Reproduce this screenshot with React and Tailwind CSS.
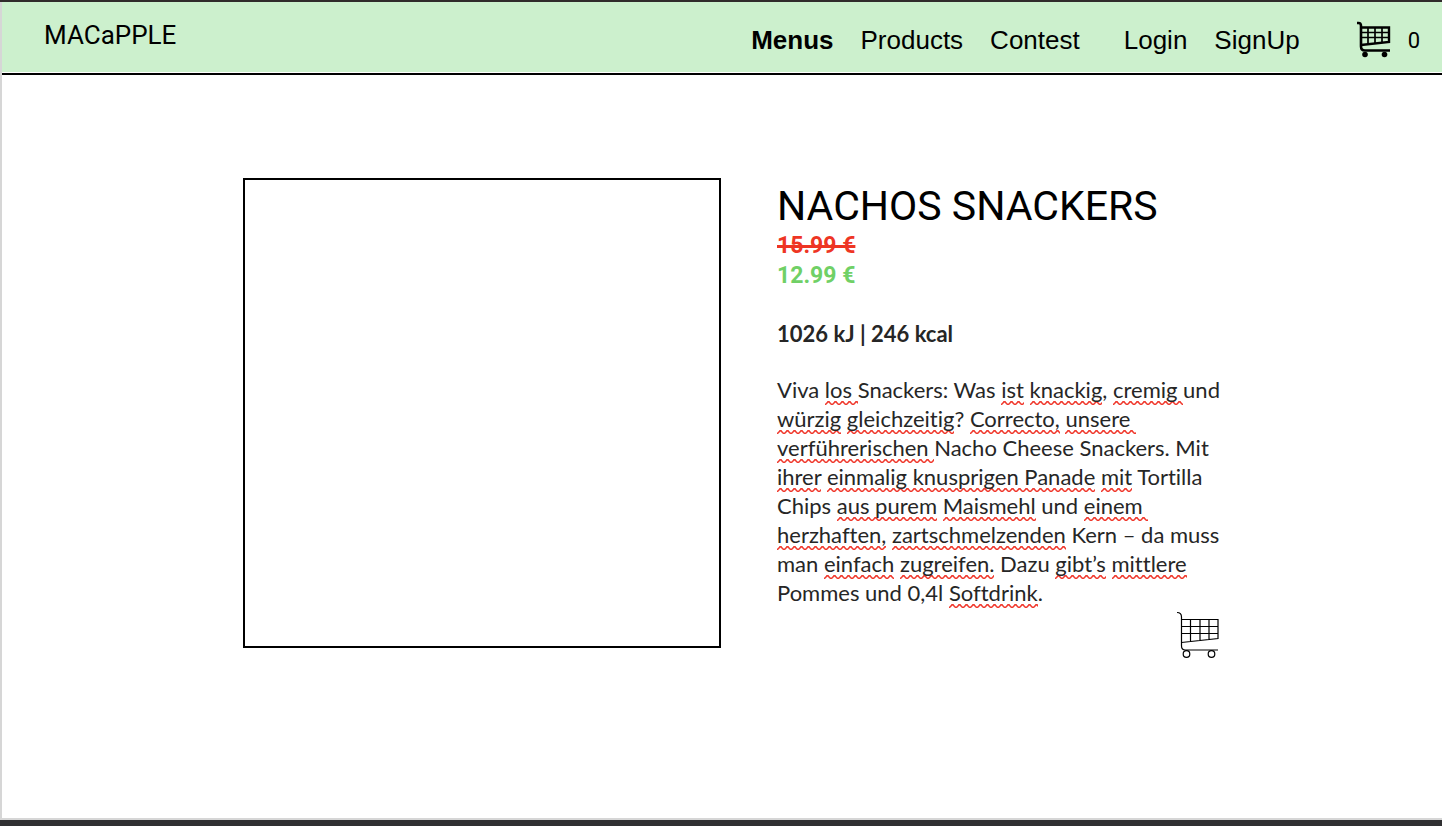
import React from "react";

function HeaderCart() {
  return (
    <svg width="36" height="38" viewBox="0 0 36 38" fill="none" stroke="#000" aria-hidden="true">
      <path d="M1 2h1.500Q5 2 5 5v20.500q0 4 4 4h25" strokeWidth="2.6" />
      <path d="M5 6.500h28v14.500L5 24" strokeWidth="2.4" />
      <path d="M5 11.500h28M5 16.500h28M12 6v17M19 6v16.500M26 6v16" strokeWidth="1.7" />
      <circle cx="9" cy="33.500" r="2.800" fill="#000" stroke="none" />
      <circle cx="28.500" cy="33.500" r="2.800" fill="#000" stroke="none" />
    </svg>
  );
}

function ProductCart() {
  return (
    <svg width="44" height="48" viewBox="0 0 44 48" fill="none" stroke="#000" strokeWidth="1.2" aria-hidden="true">
      <path d="M1 1.500C4 1.500 5.500 3 5.500 6v29q0 4 4 4H42" />
      <path d="M5.500 8.500h36.500v19L5.500 31.500M5.500 15.500H42M5.500 22.500H42M14.500 8.500v22M24 8.500v21M33 8.500v20" />
      <circle cx="10.500" cy="43" r="3.300" />
      <circle cx="35.500" cy="43" r="3.300" />
    </svg>
  );
}

function S({ children }) {
  return (
    <span className="bg-[linear-gradient(135deg,transparent_23%,#f03a2e_30%,#f03a2e_42%,transparent_49%),linear-gradient(45deg,transparent_51%,#f03a2e_58%,#f03a2e_70%,transparent_77%)] bg-[length:7px_4px] bg-left-bottom bg-repeat-x pb-0.5 whitespace-pre">
      {children}
    </span>
  );
}

export default function App() {
  return (
    <div className="flex min-h-screen flex-col border-t-2 border-b-[6px] border-t-[#302b2b] border-b-[#303032] bg-white font-['Roboto',sans-serif] text-black">
      <div className="flex flex-1 flex-col border-b-2 border-l-2 border-[#d6d6d6]">
        <header className="border-b-2 border-black pb-px">
          <div className="flex h-[70px] items-center justify-between bg-[#ccf0cd] pr-[22px] pl-[42px]">
            <a href="#home" className="mb-1 text-[26px]">MACaPPLE</a>
            <div className="mt-1.5 flex items-center font-['Liberation_Sans',sans-serif] text-[26px]">
              <nav className="flex gap-[27px]">
                <a href="#menus" className="font-bold">Menus</a>
                <a href="#products">Products</a>
                <a href="#contest">Contest</a>
              </nav>
              <div className="ml-11 flex gap-[27px]">
                <a href="#login">Login</a>
                <a href="#signup">SignUp</a>
              </div>
              <a href="#cart" aria-label="Shopping cart" className="ml-14 flex items-center gap-4 font-['Roboto',sans-serif] text-[22px]">
                <HeaderCart />
                <span>0</span>
              </a>
            </div>
          </div>
        </header>
        <main className="mx-auto mt-[103px] flex items-start gap-14 pl-6">
          <div className="h-[470px] w-[478px] border-2 border-black" />
          <section className="w-[448px]">
            <h1 className="pt-1 text-[41px] leading-[49px]">NACHOS SNACKERS</h1>
            <p className="text-[23px] leading-[30px] font-bold text-[#ee3524]"><s className="decoration-[3px]">15.99 €</s></p>
            <p className="text-[23px] leading-[30px] font-bold text-[#70d066]">12.99 €</p>
            <p className="mt-7 font-['Lato',sans-serif] text-[22px] leading-[30px] font-bold text-[#262626]">1026 kJ | 246 kcal</p>
            <p className="mt-[26px] font-['Lato',sans-serif] text-[22px] leading-[29px] whitespace-nowrap text-[#262626] [font-variant-ligatures:none]">
              Viva <S>los </S>Snackers: Was <S>ist</S> <S>knackig</S>, <S>cremig </S>und<br />
              <S>würzig</S> <S>gleichzeitig</S>? <S>Correcto,</S> <S>unsere </S><br />
              <S>verführerischen </S>Nacho Cheese Snackers. Mit<br />
              <S>ihrer</S> <S>einmalig knusprigen Panade</S> <S>mit</S> Tortilla<br />
              Chips <S>aus purem</S> <S>Maismehl</S> und <S>einem </S><br />
              <S>herzhaften,</S> <S>zartschmelzenden</S> Kern – da muss<br />
              man <S>einfach</S> <S>zugreifen.</S> Dazu <S>gibt’s</S> <S>mittlere</S><br />
              Pommes und 0,4l <S>Softdrink</S>.
            </p>
            <button type="button" aria-label="Add to cart" className="mt-1 mr-[5px] ml-auto block">
              <ProductCart />
            </button>
          </section>
        </main>
      </div>
    </div>
  );
}
